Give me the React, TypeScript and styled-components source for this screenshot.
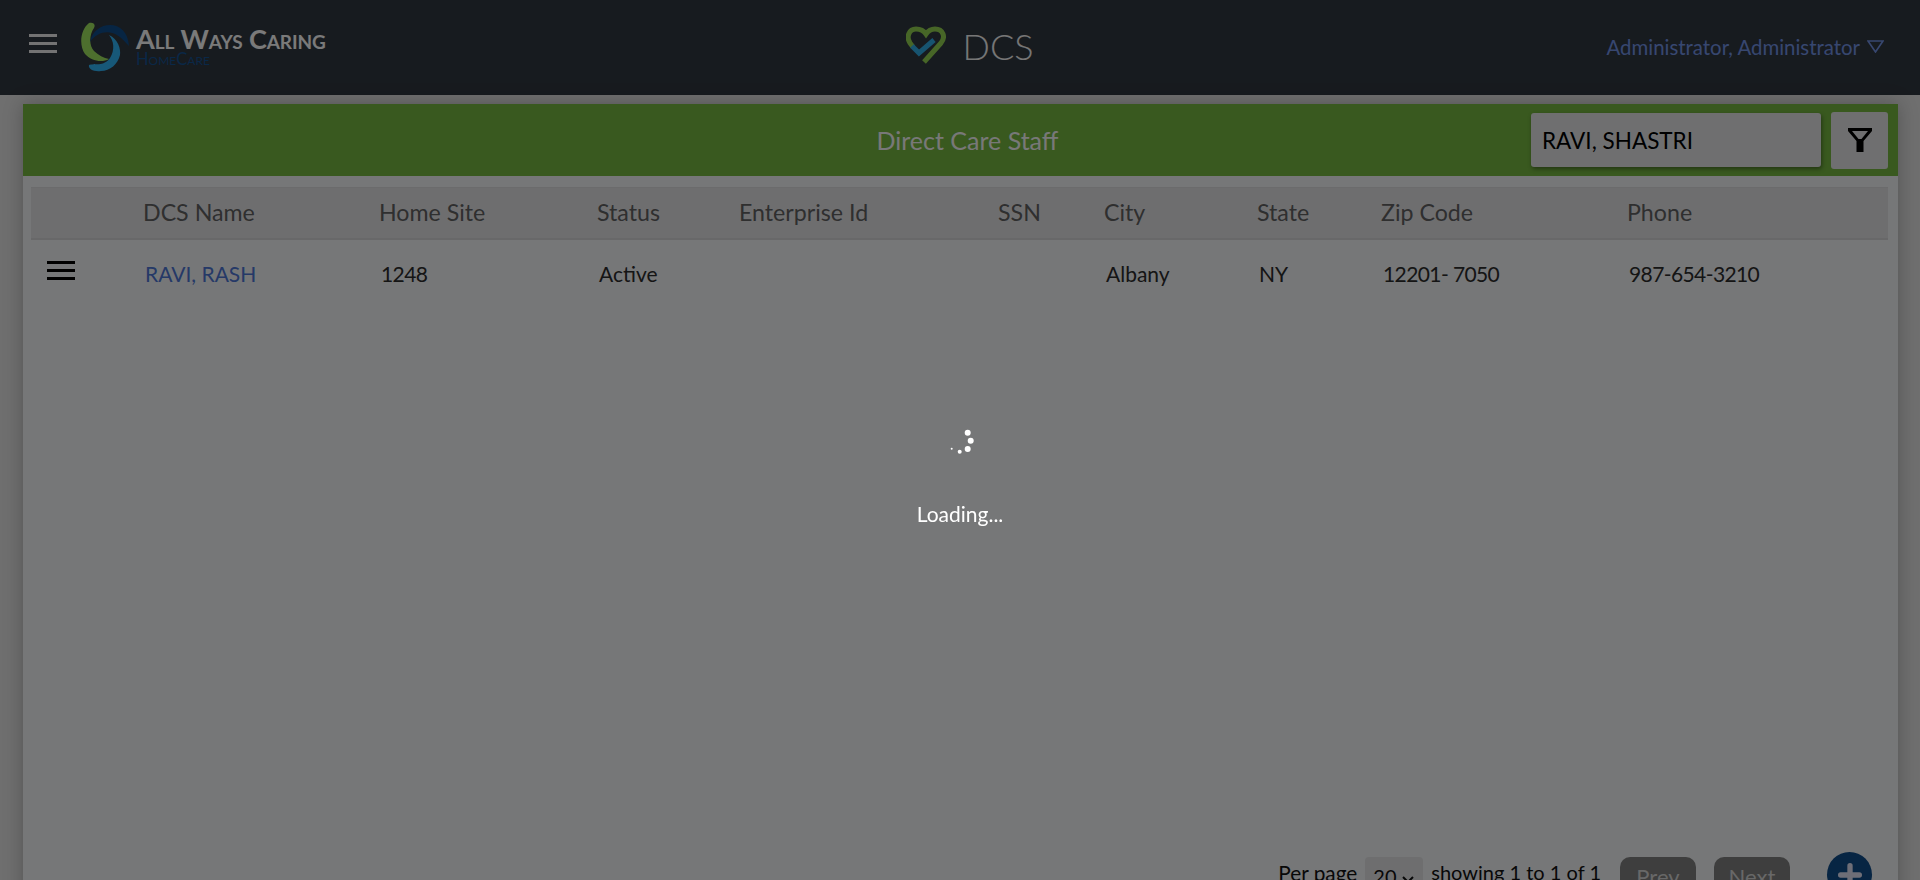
import React from 'react'
import styled, { createGlobalStyle } from 'styled-components'
import { Plus } from 'lucide-react'

const FONT = `'Lato', 'Noto Sans', sans-serif`

const columns = [
  { label: 'DCS Name', value: 'RAVI, RASH', link: true },
  { label: 'Home Site', value: '1248', numeric: true },
  { label: 'Status', value: 'Active' },
  { label: 'Enterprise Id', value: '' },
  { label: 'SSN', value: '' },
  { label: 'City', value: 'Albany' },
  { label: 'State', value: 'NY' },
  { label: 'Zip Code', value: '12201- 7050', numeric: true },
  { label: 'Phone', value: '987-654-3210', numeric: true },
]

const GRID = '112px 236px 218px 142px 259px 106px 153px 124px 246px 1fr'

const GlobalStyle = createGlobalStyle`
  html, body {
    margin: 0;
    height: 880px;
    overflow: hidden;
    background: #dedede;
    font-family: ${FONT};
  }
`

const Page = styled.div`
  height: 880px;
  overflow: hidden;
  display: flex;
  flex-direction: column;
`

const TopBar = styled.header`
  height: 95px;
  flex: none;
  background: #2f363e;
  display: grid;
  grid-template-columns: 1fr auto 1fr;
  align-items: center;
  padding: 0 36px 0 29px;
`

const BrandGroup = styled.div`
  display: flex;
  align-items: flex-start;
  gap: 23px;
  height: 95px;
  padding-top: 22px;
  box-sizing: border-box;
`

const MenuLines = styled.div<{ $color: string; $top?: number }>`
  width: 28px;
  margin-top: ${p => p.$top ?? 0}px;
  display: flex;
  flex-direction: column;
  gap: 5px;
  & > span {
    display: block;
    height: 3px;
    background: ${p => p.$color};
  }
`

const LogoWrap = styled.div`
  display: flex;
  align-items: flex-start;
  gap: 6px;
`

const LogoText = styled.div`
  display: flex;
  flex-direction: column;
  gap: 3px;
  padding-top: 5px;
`

const LogoName = styled.span`
  font-size: 27px;
  line-height: 23px;
  font-weight: 700;
  font-variant: small-caps;
  color: #f4f4f4;
  letter-spacing: -0.1px;
  white-space: nowrap;
`

const LogoSub = styled.span`
  font-size: 16.5px;
  line-height: 13px;
  font-variant: small-caps;
  color: #14508f;
  white-space: nowrap;
`

const AppTitle = styled.div`
  display: flex;
  align-items: center;
  gap: 17px;
  font-size: 36px;
  font-weight: 300;
  color: #ececec;
  margin: 0 0 4px 26px;
`

const UserMenu = styled.div`
  justify-self: end;
  display: flex;
  align-items: center;
  gap: 7px;
  margin-bottom: 2px;
  font-size: 20.4px;
  color: #6f8fe0;
  white-space: nowrap;
`

const Content = styled.main`
  flex: 1;
  padding: 9px 22px 0 23px;
`

const Card = styled.section`
  background: #eceef0;
  height: 820px;
  box-shadow: 0 0 18px rgba(0, 0, 0, 0.25);
  display: flex;
  flex-direction: column;
`

const TitleBar = styled.div`
  height: 72px;
  flex: none;
  background: #72b23e;
  display: grid;
  grid-template-columns: 1fr auto 1fr;
  align-items: center;
  padding: 0 10px 0 0;
`

const Title = styled.h1`
  grid-column: 2;
  margin: 0;
  font-size: 25px;
  font-weight: 400;
  color: #f1f1f1;
  transform: translateX(12px);
`

const Tools = styled.div`
  grid-column: 3;
  justify-self: end;
  display: flex;
  align-items: center;
  gap: 10px;
`

const SearchBox = styled.div`
  width: 290px;
  height: 54px;
  box-sizing: border-box;
  background: #dedfe0;
  border-radius: 3px;
  box-shadow: 1px 2px 4px rgba(0, 0, 0, 0.4);
  display: flex;
  align-items: center;
  padding: 0 11px;
  font-size: 22.5px;
  color: #000;
`

const FilterButton = styled.div`
  width: 57px;
  height: 57px;
  background: #dedfe0;
  border-radius: 3px;
  display: flex;
  align-items: center;
  justify-content: center;
`

const Table = styled.div`
  height: 670px;
  flex: none;
  margin: 11px 10px 0 8px;
`

const HeadRow = styled.div`
  display: grid;
  grid-template-columns: ${GRID};
  height: 53px;
  align-items: center;
  background: #dcddde;
  border-bottom: 2px solid #d0d1d2;
  border-top: 1px solid #d6d7d8;
  box-sizing: border-box;
  font-size: 23.2px;
  color: #5e5e5e;
  & > span {
    margin-top: -3px;
  }
`

const DataRow = styled.div`
  display: grid;
  grid-template-columns: ${GRID};
  height: 66px;
  align-items: center;
  font-size: 21px;
  color: #2a2a2a;
`

const Cell = styled.div<{ $link?: boolean; $numeric?: boolean }>`
  padding-left: 2px;
  color: ${p => (p.$link ? '#4a72cf' : 'inherit')};
  letter-spacing: ${p => (p.$numeric ? '-0.6px' : '0')};
  white-space: nowrap;
`

const RowMenu = styled.div`
  padding: 0 0 6px 16px;
`

const Footer = styled.div`
  display: flex;
  align-items: flex-start;
  justify-content: flex-end;
  height: 60px;
  padding-right: 26px;
  font-size: 20px;
  color: #111;
`

const PerPage = styled.span`
  margin-right: 8px;
  padding-top: 3px;
  font-size: 20.8px;
`

const PageSelect = styled.div`
  width: 58px;
  height: 40px;
  display: flex;
  gap: 4px;
  background: #dcddde;
  border-radius: 4px;
  box-sizing: border-box;
  padding: 7px 0 0 8px;
  margin-right: 8px;
`

const Showing = styled.span`
  margin-right: 19px;
  padding-top: 3px;
`

const PageButton = styled.div<{ $last?: boolean }>`
  width: 76px;
  height: 40px;
  margin-right: ${p => (p.$last ? 37 : 18)}px;
  background: #7d7d7d;
  border-radius: 10px 10px 0 0;
  color: #d0d0d0;
  font-size: 22px;
  text-align: center;
  padding-top: 6px;
  box-sizing: border-box;
`

const AddButton = styled.div`
  width: 45px;
  height: 45px;
  margin-top: -5px;
  border-radius: 50%;
  background: #0f4a86;
  color: #dde;
  display: flex;
  align-items: center;
  justify-content: center;
`

const Overlay = styled.div`
  position: fixed;
  inset: 0;
  background: rgba(0, 0, 0, 0.5);
  display: flex;
  flex-direction: column;
  align-items: center;
  padding-top: 421px;
  box-sizing: border-box;
`

const LoadingText = styled.div`
  margin-top: 42px;
  font-size: 21px;
  line-height: 22px;
  color: #fff;
`

function LogoMark() {
  return (
    <svg width="50" height="50" viewBox="0 0 50 50">
      <path d="M9 1 C13 0 16 2 14 6 C9 13 9 24 14 29 C18 33 24 36 29 37 C22 41 11 39 5 32 C-1 24 0 8 9 1 Z" fill="#9ade5c" />
      <path d="M10 20 C12 9 21 3 30 3 C40 3 48 10 49 24 C46 21 42 16 37 13 C28 8 17 10 10 20 Z" fill="#0f4a86" />
      <path d="M29 13 C38 17 41 27 40 33 C38 42 30 49 21 49 C14 50 8 47 9 43 C14 41 24 45 30 36 C35 28 34 19 29 13 Z" fill="#2fb0f0" />
    </svg>
  )
}

function HeartMark() {
  return (
    <svg width="40" height="40" viewBox="0 0 40 40" fill="none">
      <path d="M18 36 L35 17 C40 11 37 3 29 3 C25 3 22 5 20 8 C18 5 14 3 10 3 C3 3 0 11 4 17 L7 21" stroke="#8fcc4e" strokeWidth="5" />
      <path d="M6 20 L13 27 L28 14" stroke="#2fa8e0" strokeWidth="5" />
    </svg>
  )
}

function FunnelIcon() {
  return (
    <svg width="26" height="26" viewBox="0 0 26 26">
      <path d="M1 1 H25 V4 L16.5 14 V25 H9.5 V14 L1 4 Z M5 4 L11.5 12 H14.5 L21 4 Z" fill="#000" fillRule="evenodd" />
    </svg>
  )
}

function Spinner() {
  const dots = [
    [27.7, 11.7, 3],
    [30.7, 19.7, 3],
    [27.7, 28, 3],
    [19.7, 30.7, 2],
    [11.7, 27.7, 1],
  ]
  return (
    <svg width="40" height="40" viewBox="0 0 40 40">
      {dots.map(([x, y, r]) => (
        <circle key={x + '-' + y} cx={x} cy={y} r={r} fill="#fff" />
      ))}
    </svg>
  )
}

export default function App() {
  return (
    <Page>
      <GlobalStyle />
      <TopBar>
        <BrandGroup>
          <MenuLines $color="#e6e6e6" $top={12}>
            <span />
            <span />
            <span />
          </MenuLines>
          <LogoWrap>
            <LogoMark />
            <LogoText>
              <LogoName>All Ways Caring</LogoName>
              <LogoSub>HomeCare</LogoSub>
            </LogoText>
          </LogoWrap>
        </BrandGroup>
        <AppTitle>
          <HeartMark />
          DCS
        </AppTitle>
        <UserMenu>
          Administrator, Administrator
          <svg width="17" height="13" viewBox="0 0 17 13" fill="none">
            <path d="M1 1 H16 L8.5 12 Z" stroke="#6f8fe0" strokeWidth="1.6" />
          </svg>
        </UserMenu>
      </TopBar>
      <Content>
        <Card>
          <TitleBar>
            <Title>Direct Care Staff</Title>
            <Tools>
              <SearchBox>RAVI, SHASTRI</SearchBox>
              <FilterButton>
                <FunnelIcon />
              </FilterButton>
            </Tools>
          </TitleBar>
          <Table>
            <HeadRow>
              <span />
              {columns.map(c => (
                <span key={c.label}>{c.label}</span>
              ))}
            </HeadRow>
            <DataRow>
              <RowMenu>
                <MenuLines $color="#000">
                  <span />
                  <span />
                  <span />
                </MenuLines>
              </RowMenu>
              {columns.map(c => (
                <Cell key={c.label} $link={c.link} $numeric={c.numeric}>
                  {c.value}
                </Cell>
              ))}
            </DataRow>
          </Table>
          <Footer>
            <PerPage>Per page</PerPage>
            <PageSelect>
              20
              <svg width="14" height="24" viewBox="0 0 14 24" fill="none">
                <path d="M2 13 L7 18 L12 13" stroke="#111" strokeWidth="2" />
              </svg>
            </PageSelect>
            <Showing>showing 1 to 1 of 1</Showing>
            <PageButton>Prev</PageButton>
            <PageButton $last>Next</PageButton>
            <AddButton>
              <Plus size={32} strokeWidth={4} />
            </AddButton>
          </Footer>
        </Card>
      </Content>
      <Overlay>
        <Spinner />
        <LoadingText>Loading...</LoadingText>
      </Overlay>
    </Page>
  )
}
